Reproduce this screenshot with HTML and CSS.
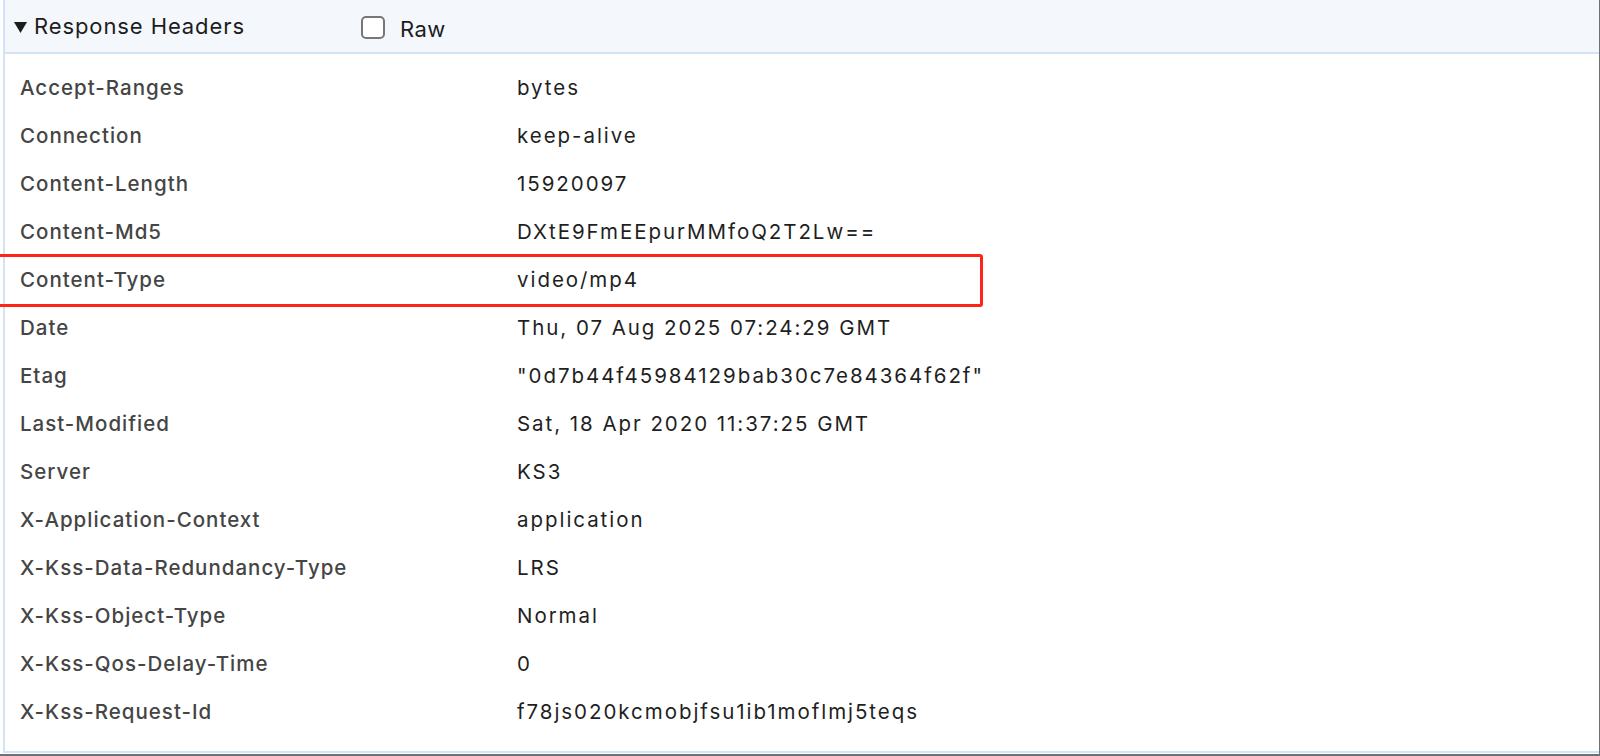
FILE: index.html
```html
<!DOCTYPE html>
<html lang="en">
<head>
  <meta charset="UTF-8" />
  <title>Response Headers</title>
  <link rel="stylesheet" href="styles.css">
</head>
<body>
  <div class="frame">
    <section class="panel">
      <div class="panel-head">
        <span class="head-title">
          <svg class="caret" width="13" height="11" viewBox="0 0 13 11"><path d="M0 0 H13 L6.5 11 Z" fill="#1d1d1d"/></svg>
          Response Headers
        </span>
        <label class="raw"><span class="box"></span>Raw</label>
      </div>

      <div class="headers">
        <div class="row"><span class="key">Accept-Ranges</span><span class="val">bytes</span></div>
        <div class="row"><span class="key">Connection</span><span class="val">keep-alive</span></div>
        <div class="row"><span class="key">Content-Length</span><span class="val">15920097</span></div>
        <div class="row"><span class="key">Content-Md5</span><span class="val">DXtE9FmEEpurMMfoQ2T2Lw==</span></div>
        <div class="row marked"><span class="key">Content-Type</span><span class="val">video/mp4</span><span class="mark"></span></div>
        <div class="row"><span class="key">Date</span><span class="val">Thu, 07 Aug 2025 07:24:29 GMT</span></div>
        <div class="row"><span class="key">Etag</span><span class="val">"0d7b44f45984129bab30c7e84364f62f"</span></div>
        <div class="row"><span class="key">Last-Modified</span><span class="val">Sat, 18 Apr 2020 11:37:25 GMT</span></div>
        <div class="row"><span class="key">Server</span><span class="val">KS3</span></div>
        <div class="row"><span class="key">X-Application-Context</span><span class="val">application</span></div>
        <div class="row"><span class="key">X-Kss-Data-Redundancy-Type</span><span class="val">LRS</span></div>
        <div class="row"><span class="key">X-Kss-Object-Type</span><span class="val">Normal</span></div>
        <div class="row"><span class="key">X-Kss-Qos-Delay-Time</span><span class="val">0</span></div>
        <div class="row"><span class="key">X-Kss-Request-Id</span><span class="val">f78js020kcmobjfsu1ib1moflmj5teqs</span></div>
      </div>
    </section>
  </div>
</body>
</html>
```

FILE: styles.css
```css
* {
  box-sizing: border-box;
}

body {
  margin: 0;
  background: #fff;
  font-family: "Inter", "Liberation Sans", sans-serif;
  overflow: hidden;
}

.frame {
  width: 1600px;
  height: 756px;
  padding: 0 0 1px 3px;
  border-right: 1px solid #707070;
  border-bottom: 2px solid #707070;
}

.panel {
  height: 100%;
  border-left: 2px solid #d3e3f7;
  border-bottom: 2px solid #d3e3f7;
}

.panel-head {
  height: 54px;
  display: flex;
  align-items: center;
  padding-left: 9px;
  background: #f4f8fc;
  border-bottom: 2px solid #d3e3f7;
  font-size: 22px;
  letter-spacing: 0.9px;
  color: #1d1d1d;
}

.head-title {
  width: 347px;
  display: flex;
  align-items: center;
  gap: 7px;
}

.caret {
  margin-top: 3px;
}

.raw {
  display: flex;
  align-items: center;
  gap: 15px;
  padding-top: 5px;
  letter-spacing: 0.4px;
}

.raw .box {
  width: 24px;
  height: 23px;
  border: 2px solid #777;
  border-radius: 5px;
  background: #fff;
  margin-top: -2px;
}

.headers {
  padding: 9px 0 0 15px;
  font-size: 20.5px;
}

.row {
  position: relative;
  height: 48px;
  display: grid;
  grid-template-columns: 497px 1fr;
  align-items: center;
}

.key {
  color: #454545;
  font-weight: 500;
  letter-spacing: 1px;
}

.val {
  color: #1f1f1f;
  letter-spacing: 1.95px;
}

.mark {
  position: absolute;
  left: -30px;
  top: -1px;
  bottom: -4px;
  width: 993px;
  border: 3px solid #ff2419;
  border-radius: 3px;
}
```
